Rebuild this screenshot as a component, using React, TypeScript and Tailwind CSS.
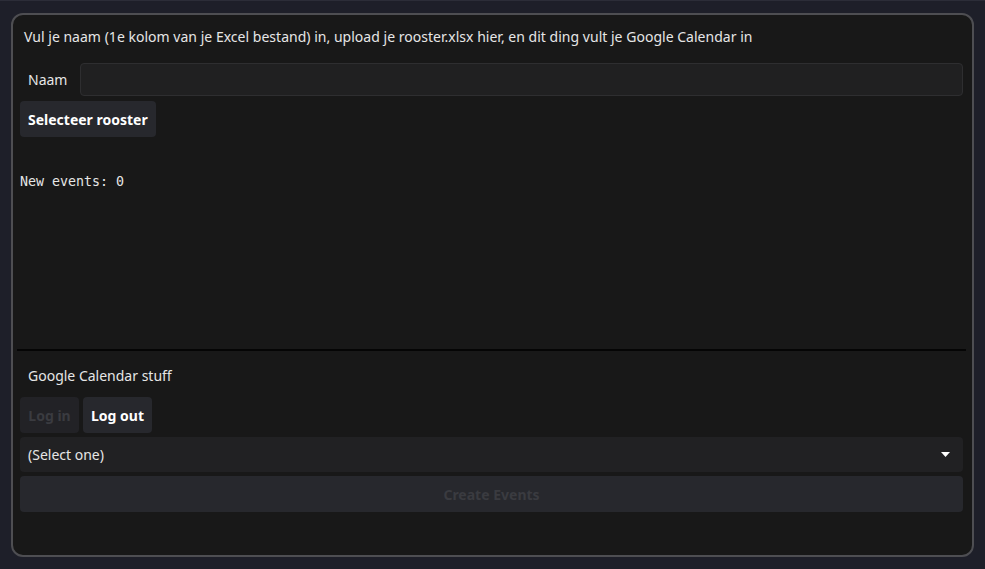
const font = { fontFamily: "'Noto Sans', 'Open Sans', sans-serif" };

export default function App() {
  return (
    <div
      className="h-[569px] w-[985px] border-t border-[#2c2d38] bg-[#1e1f29] pl-[11px] pt-[12px] text-[14px] text-[#e6e6e6]"
      style={font}
    >
      <div className="flex h-[544px] w-[963px] flex-col rounded-[12px] border-2 border-[#4e4e52] bg-[#181818] pl-[7px] pr-[9px]">
        {/* upload section */}
        <div className="flex h-[334px] flex-col">
          <p className="mt-[12px] h-[20px] pl-[4px] leading-[20px] tracking-[0.02px]">
            Vul je naam (1e kolom van je Excel bestand) in, upload je rooster.xlsx hier, en dit ding vult je Google Calendar in
          </p>
          <div className="mt-[16px] flex h-[33px] items-center">
            <label className="w-[60px] pl-[8px]">Naam</label>
            <input className="h-[33px] flex-1 rounded-[4px] border border-[#2e2e30] bg-[#202021] px-2 text-[#e6e6e6] outline-none" />
          </div>
          <div className="mt-[5px]">
            <button className="h-[36px] rounded-[4px] bg-[#27282d] px-[8px] font-bold text-white">
              Selecteer rooster
            </button>
          </div>
          <pre
            className="mt-[37px] text-[13.3px] leading-[16px] text-[#e6e6e6]"
            style={{ fontFamily: "'DejaVu Sans Mono', monospace" }}
          >
            New events: 0
          </pre>
        </div>
        <div className="-ml-[3px] -mr-[3px] h-[2px] bg-[#050505]" />

        {/* calendar section */}
        <p className="mt-[15px] h-[20px] pl-[8px] leading-[20px]">Google Calendar stuff</p>
        <div className="mt-[11px] flex gap-[4px]">
          <button disabled className="h-[36px] w-[59px] rounded-[4px] bg-[#222226] font-bold text-[#3a3b40]">
            Log in
          </button>
          <button className="h-[36px] w-[69px] rounded-[4px] bg-[#27282d] font-bold text-white">
            Log out
          </button>
        </div>
        <div className="mt-[4px] flex h-[35px] items-center justify-between rounded-[4px] bg-[#212123] pl-[8px] pr-[13px]">
          <span>(Select one)</span>
          <svg width="9" height="6" viewBox="0 0 9 6">
            <polygon points="0,0 9,0 4.5,5" fill="#ffffff" />
          </svg>
        </div>
        <button
          disabled
          className="mt-[4px] h-[36px] w-full rounded-[4px] bg-[#27282d] font-bold text-[#3a3b40]"
        >
          Create Events
        </button>
      </div>
    </div>
  );
}
